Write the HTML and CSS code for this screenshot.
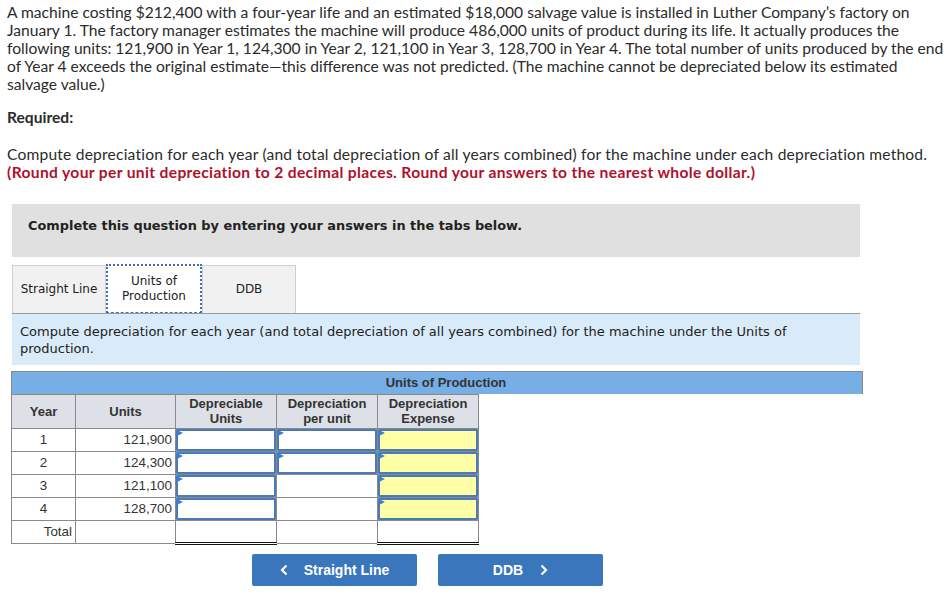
FILE: index.html
```html
<!DOCTYPE html>
<html>
<head>
<meta charset="utf-8">
<link rel="stylesheet" href="styles.css">
</head>
<body>
<div class="page">
  <p class="intro">A machine costing $212,400 with a four-year life and an estimated $18,000 salvage value is installed in Luther Company’s factory on January 1. The factory manager estimates the machine will produce 486,000 units of product during its life. It actually produces the following units: 121,900 in Year 1, 124,300 in Year 2, 121,100 in Year 3, 128,700 in Year 4. The total number of units produced by the end of Year 4 exceeds the original estimate—this difference was not predicted. (The machine cannot be depreciated below its estimated salvage value.)</p>
  <p class="required">Required:</p>
  <p class="task">Compute depreciation for each year (and total depreciation of all years combined) for the machine under each depreciation method.<br><span class="red">(Round your per unit depreciation to 2 decimal places. Round your answers to the nearest whole dollar.)</span></p>

  <div class="panel">
    <div class="notice">Complete this question by entering your answers in the tabs below.</div>
    <div class="tabs">
      <div class="tab">Straight Line</div>
      <div class="tab active">Units of<br>Production</div>
      <div class="tab">DDB</div>
    </div>
    <div class="instr">Compute depreciation for each year (and total depreciation of all years combined) for the machine under the Units of production.</div>

    <div class="grid">
      <div class="band">Units of Production</div>
      <table class="tbl">
        <tr class="hdr">
          <th class="c-year">Year</th>
          <th class="c-units">Units</th>
          <th class="c-col">Depreciable<br>Units</th>
          <th class="c-col">Depreciation<br>per unit</th>
          <th class="c-col">Depreciation<br>Expense</th>
        </tr>
        <tr>
          <td class="ctr">1</td><td class="num">121,900</td>
          <td class="inp"><div class="box"></div></td>
          <td class="inp"><div class="box"></div></td>
          <td class="inp"><div class="box yel"></div></td>
        </tr>
        <tr>
          <td class="ctr">2</td><td class="num">124,300</td>
          <td class="inp"><div class="box"></div></td>
          <td class="inp"><div class="box"></div></td>
          <td class="inp"><div class="box yel"></div></td>
        </tr>
        <tr>
          <td class="ctr">3</td><td class="num">121,100</td>
          <td class="inp"><div class="box"></div></td>
          <td></td>
          <td class="inp"><div class="box yel"></div></td>
        </tr>
        <tr>
          <td class="ctr">4</td><td class="num">128,700</td>
          <td class="inp"><div class="box"></div></td>
          <td></td>
          <td class="inp"><div class="box yel"></div></td>
        </tr>
        <tr class="total">
          <td class="num">Total</td><td></td>
          <td class="dbl"></td>
          <td></td>
          <td class="dbl"></td>
        </tr>
      </table>
    </div>

    <div class="nav">
      <div class="btn"><svg class="chev" width="8" height="12" viewBox="0 0 8 12"><path d="M6.5 1.5 L2 6 L6.5 10.5" fill="none" stroke="#fff" stroke-width="2.2"/></svg><span class="lbl-l">Straight Line</span></div>
      <div class="btn"><span>DDB</span><svg class="chev r" width="8" height="12" viewBox="0 0 8 12"><path d="M1.5 1.5 L6 6 L1.5 10.5" fill="none" stroke="#fff" stroke-width="2.2"/></svg></div>
    </div>
  </div>
</div>
</body>
</html>
```

FILE: styles.css
```css
* { box-sizing: border-box; }
html, body { margin: 0; padding: 0; background: #fff; }
.page {
  padding: 3px 0 0 7px;
  width: 950px;
  font-family: "Lato", "Open Sans", sans-serif;
  color: #2b2b2b;
}
.intro, .task, .required {
  margin: 0;
  font-size: 15.6px;
  line-height: 18px;
}
.intro { width: 942px; }
.required { font-weight: bold; margin-top: 15px; }
.task { margin-top: 19px; letter-spacing: 0.2px; }
.red { color: #b0102b; font-weight: bold; letter-spacing: 0.35px; }

.panel { width: 855px; margin-top: 23px; }
.notice {
  margin-left: 5px;
  width: 848px;
  height: 53px;
  background: #e0e0e0;
  padding: 14px 0 0 16px;
  font-family: "DejaVu Sans", Verdana, sans-serif;
  font-size: 12.9px;
  font-weight: bold;
  color: #222;
}
.tabs {
  margin: 8px 0 0 5px;
  display: flex;
  height: 48px;
  font-family: "DejaVu Sans", Verdana, sans-serif;
  font-size: 12px;
  color: #222;
}
.tab {
  width: 94px;
  border: 1px solid #cfcfcf;
  border-bottom: none;
  background: #f1f1f1;
  display: flex;
  align-items: center;
  justify-content: center;
  text-align: center;
  line-height: 15px;
}
.tab.active {
  width: 96px;
  background: #fff;
  border: 2px dotted #3b6fb6;
  border-bottom: 1px dashed #3b6fb6;
  margin-top: -1px;
  height: 49px;
  position: relative;
  z-index: 1;
}
.instr {
  margin-left: 5px;
  width: 848px;
  height: 52px;
  background: #d9ebf9;
  border-top: 1px solid #9a9a9a;
  padding: 9px 0 0 8px;
  font-family: "DejaVu Sans", Verdana, sans-serif;
  font-size: 13px;
  line-height: 17px;
  color: #222;
}

.grid { margin: 6px 0 0 4px; }
.band {
  width: 852px;
  height: 23px;
  background: #77aee6;
  border: 1px solid #8a8a8a;
  border-bottom: none;
  font-family: "Liberation Sans", Arial, sans-serif;
  font-size: 13px;
  font-weight: bold;
  color: #333;
  text-align: center;
  padding: 3px 0 0 18px;
}
.tbl {
  border-collapse: collapse;
  font-family: "Liberation Sans", Arial, sans-serif;
  font-size: 13.4px;
  color: #333;
}
.tbl td, .tbl th {
  border: 1px solid #8a8a8a;
  padding: 0;
  height: 23px;
  line-height: 16px;
}
.tbl th {
  background: #dde0e7;
  font-weight: bold;
  font-size: 13px;
  line-height: 15px;
  height: 34px;
  padding-bottom: 1px;
  vertical-align: middle;
}
.c-year { width: 64px; }
.c-units { width: 100px; }
.c-col { width: 101px; }
.ctr { text-align: center; }
.num { text-align: right; padding-right: 3px !important; }
.tbl td.inp { padding: 0; }
.box {
  height: 22px;
  border: 2px solid #4a7ab7;
  border-radius: 1px;
  background: #fff;
  position: relative;
}
.box.yel { background: #ffffa6; }
.box::before {
  content: "";
  position: absolute;
  left: -1px;
  top: -1px;
  border-left: 6px solid #3d7ed0;
  border-top: 3px solid transparent;
  border-bottom: 3px solid transparent;
}
.tbl td.dbl { border-bottom: 3px double #111; }

.nav {
  display: flex;
  gap: 21px;
  margin: 9px 0 0 245px;
}
.btn {
  width: 165px;
  height: 32px;
  background: #3a76bb;
  border-radius: 2px;
  color: #fff;
  font-family: "Liberation Sans", Arial, sans-serif;
  font-weight: bold;
  font-size: 14px;
  display: flex;
  align-items: center;
  justify-content: center;
}
.chev { margin-right: 16px; }
.chev.r { margin: 0 0 0 17px; }
```
